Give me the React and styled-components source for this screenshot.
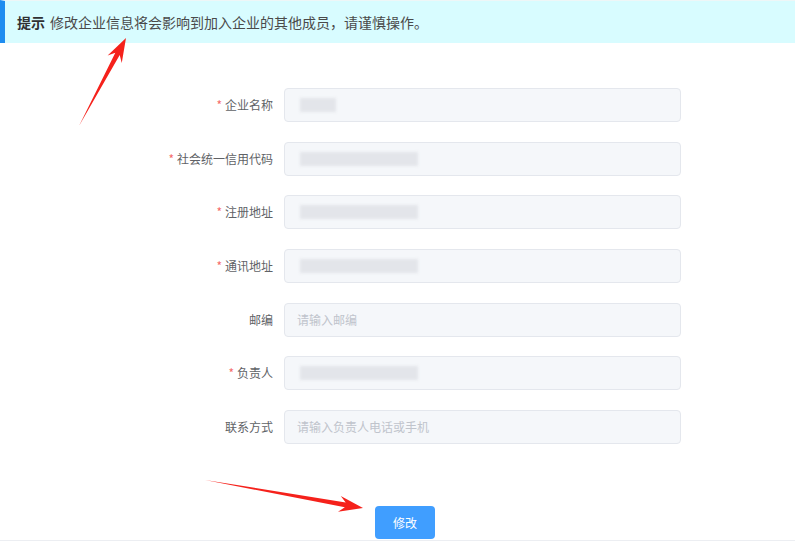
import React from "react";
import styled, { createGlobalStyle } from "styled-components";

const Global = createGlobalStyle`
  html, body { margin: 0; padding: 0; background: #fff; }
  body { font-family: "Noto Sans CJK SC", "Microsoft YaHei", sans-serif; width: 795px; height: 547px; overflow: hidden; }
`;

const Page = styled.div`
  position: relative;
  width: 795px;
  height: 547px;
  display: flex;
  flex-direction: column;
`;

const Notice = styled.div`
  height: 43px;
  box-sizing: border-box;
  background: #d8fcff;
  border-left: 5px solid #1e8cf0;
  border-top: 1px solid #eef6f7;
  display: flex;
  align-items: center;
  padding-left: 12px;
  font-size: 14px;
  color: #4a4a4a;
  line-height: 20px;
`;

const NoticeTitle = styled.strong`
  color: #303133;
  font-weight: 700;
  margin-right: 5px;
`;

const Form = styled.div`
  margin-top: 45px;
  display: grid;
  grid-template-columns: 273px 397px;
  column-gap: 11px;
  row-gap: 19.67px;
  align-items: center;
`;

const Label = styled.label`
  text-align: right;
  font-size: 12px;
  color: #606266;
  line-height: 34px;
  white-space: nowrap;
`;

const Star = styled.span`
  color: #f56c6c;
  margin-right: 3px;
  font-size: 12px;
`;

const Field = styled.div`
  position: relative;
  height: 34px;
  box-sizing: border-box;
  background: #f5f7fa;
  border: 1px solid #e4e7ed;
  border-radius: 4px;
  display: flex;
  align-items: center;
  padding-left: 12px;
  font-size: 12px;
  color: #c0c4cc;
`;

const Blur = styled.div`
  height: 14px;
  width: ${(p) => p.w}px;
  margin-left: 3px;
  background: #e3e5ea;
  filter: blur(1.5px);
`;

const ButtonRow = styled.div`
  margin-top: 62px;
  padding-left: 375px;
  padding-bottom: 1px;
  border-bottom: 1px solid #eceef2;
`;

const Button = styled.button`
  width: 60px;
  height: 33px;
  border: none;
  border-radius: 4px;
  background: #409eff;
  color: #fff;
  font-family: inherit;
  font-size: 12px;
  cursor: pointer;
  display: block;
`;

const Arrows = styled.svg`
  position: absolute;
  left: 0;
  top: 0;
  pointer-events: none;
`;

const rows = [
  { label: "企业名称", req: true, blur: 36 },
  { label: "社会统一信用代码", req: true, blur: 118 },
  { label: "注册地址", req: true, blur: 118 },
  { label: "通讯地址", req: true, blur: 118 },
  { label: "邮编", req: false, ph: "请输入邮编" },
  { label: "负责人", req: true, blur: 118 },
  { label: "联系方式", req: false, ph: "请输入负责人电话或手机" },
];

function Arrow({ x1, y1, x2, y2 }) {
  const dx = x2 - x1;
  const dy = y2 - y1;
  const len = Math.hypot(dx, dy);
  const ux = dx / len;
  const uy = dy / len;
  const nx = -uy;
  const ny = ux;
  const hl = 24;
  const hw = 8;
  const bx = x2 - ux * hl;
  const by = y2 - uy * hl;
  const sx = x2 - ux * (hl - 6);
  const sy = y2 - uy * (hl - 6);
  const shaft = `${x1},${y1} ${sx + nx * 2.5},${sy + ny * 2.5} ${bx + nx * hw},${by + ny * hw} ${x2},${y2} ${bx - nx * hw},${by - ny * hw} ${sx - nx * 2.5},${sy - ny * 2.5}`;
  return <polygon points={shaft} fill="#f5211b" />;
}

export default function App() {
  return (
    <Page>
      <Global />
      <Notice>
        <NoticeTitle>提示</NoticeTitle>
        修改企业信息将会影响到加入企业的其他成员，请谨慎操作。
      </Notice>
      <Form>
        {rows.map((r) => (
          <React.Fragment key={r.label}>
            <Label>
              {r.req && <Star>*</Star>}
              {r.label}
            </Label>
            <Field>{r.ph ? r.ph : <Blur w={r.blur} />}</Field>
          </React.Fragment>
        ))}
      </Form>
      <ButtonRow>
        <Button>修改</Button>
      </ButtonRow>
      <Arrows width="795" height="547" viewBox="0 0 795 547">
        <Arrow x1={79} y1={126} x2={126} y2={38} />
        <Arrow x1={205} y1={480} x2={363} y2={508} />
      </Arrows>
    </Page>
  );
}
